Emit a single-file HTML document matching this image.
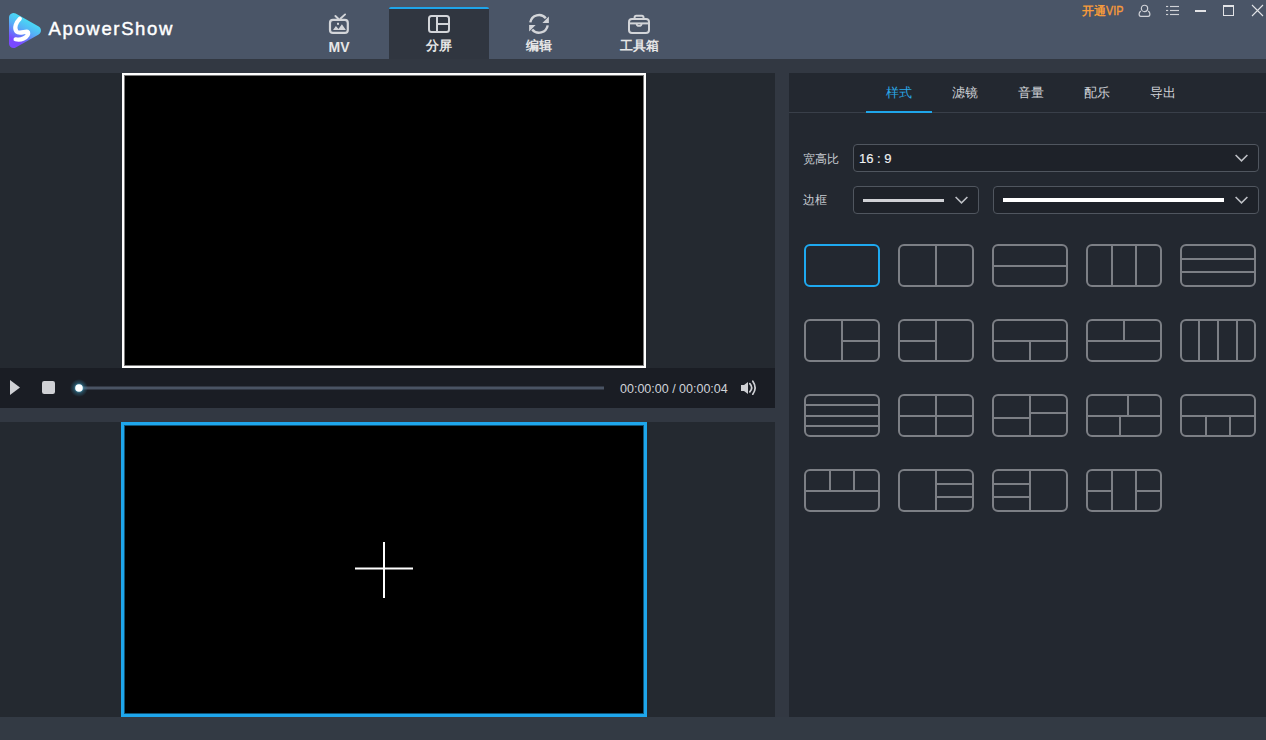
<!DOCTYPE html>
<html><head><meta charset="utf-8">
<style>
*{margin:0;padding:0;box-sizing:border-box}
html,body{width:1266px;height:740px;overflow:hidden;background:#333a44;font-family:"Liberation Sans",sans-serif;position:relative}
.abs{position:absolute}
#title{left:0;top:0;width:1266px;height:59px;background:#4a5567}
#strip{left:0;top:59px;width:1266px;height:14px;background:#323842}
#lp1{left:0;top:73px;width:775px;height:295px;background:#242930}
#ctrl{left:0;top:368px;width:775px;height:40px;background:#1a1d24}
#gap{left:0;top:408px;width:775px;height:14px;background:#323842}
#lp2{left:0;top:422px;width:775px;height:295px;background:#242930}
#div{left:775px;top:73px;width:14px;height:644px;background:#323842}
#rp{left:789px;top:73px;width:477px;height:644px;background:#232830}
#status{left:0;top:717px;width:1266px;height:23px;background:#333a44}
#vid1{left:122px;top:73px;width:524px;height:295px;background:#000;border:2px solid #fff;box-shadow:inset 0 0 0 1px #7a7a7a}
#vid2{left:121px;top:422px;width:526px;height:295px;background:#000;border:3px solid #1ea6ec;box-shadow:inset 0 0 0 1px #0f5376}
.tab{top:0;width:100px;height:59px;color:#e6e6e6;font-size:13px;font-weight:bold;text-align:center}
.tab .lbl{position:absolute;left:0;width:100px;top:38px;line-height:16px}
.tab svg{position:absolute;top:12px;left:39px}
#tabact{background:#303640;top:7px;height:52px;border-top:2px solid #1fa5ea;border-radius:2px 2px 0 0}
.rtab{top:83px;width:66px;text-align:center;font-size:13px;color:#d0d3d8;line-height:20px}
.lab{left:803px;font-size:12px;color:#c8ccd2}
.dd{border:1px solid #50565f;border-radius:4px;background:#1e2229}
.chev{position:absolute}
.ico{position:absolute}
</style></head>
<body>
<div id="title" class="abs"></div>
<div id="strip" class="abs"></div>
<div id="lp1" class="abs"></div>
<div id="ctrl" class="abs"></div>
<div id="gap" class="abs"></div>
<div id="lp2" class="abs"></div>
<div id="div" class="abs"></div>
<div id="rp" class="abs"></div>
<div id="status" class="abs"></div>
<div id="vid1" class="abs"></div>

<svg class="abs" style="left:0;top:0" width="60" height="59" viewBox="0 0 60 59">
<defs><linearGradient id="lg" x1="0.75" y1="0.05" x2="0.3" y2="1">
<stop offset="0" stop-color="#46e4f3"/><stop offset="0.45" stop-color="#55b2f6"/><stop offset="1" stop-color="#7949ff"/></linearGradient></defs>
<polygon points="13.5,17.5 13.5,43.5 36.5,30.5" fill="url(#lg)" stroke="url(#lg)" stroke-width="9" stroke-linejoin="round"/>
<path d="M19.8,18.8 C16,22.5 13.8,28 16.5,31.5 C19.5,34.5 25,31 27.5,31.8 C29.5,33 27,37 23.5,38.5 C20.5,40 17.5,39.8 15.6,39.3" fill="none" stroke="#fff" stroke-width="4.2" stroke-linecap="round" stroke-linejoin="round"/>
</svg>
<div class="abs" id="brand" style="left:48.5px;top:18px;font-size:18.5px;color:#fff;letter-spacing:1.65px;line-height:22px;-webkit-text-stroke:0.45px #fff">ApowerShow</div>

<div class="abs tab" style="left:289px">
<svg width="24" height="24" viewBox="0 0 24 24" style="left:38px;top:12px">
<rect x="3" y="7.9" width="17.8" height="13" rx="3" fill="none" stroke="#d3d5d9" stroke-width="2.2"/>
<line x1="8.4" y1="4" x2="11.3" y2="6.8" stroke="#d3d5d9" stroke-width="1.9" stroke-linecap="round"/>
<line x1="18.1" y1="2.4" x2="13.3" y2="6.8" stroke="#d3d5d9" stroke-width="1.9" stroke-linecap="round"/>
<polygon points="6,18 8.9,14 11.5,16.9 14.9,12.3 18.9,18" fill="#d3d5d9"/>
<rect x="10" y="10.8" width="2" height="2" fill="#d3d5d9"/>
</svg>
<div class="lbl" style="font-size:14px;top:39px">MV</div></div>

<div class="abs tab" id="tabact" style="left:389px">
<svg width="24" height="22" viewBox="0 0 24 22" style="left:38px;top:5px">
<rect x="2" y="2" width="20" height="16" rx="2.5" fill="none" stroke="#d3d5d9" stroke-width="2"/>
<line x1="10" y1="2" x2="10" y2="18" stroke="#d3d5d9" stroke-width="2"/>
<line x1="10" y1="10" x2="22" y2="10" stroke="#d3d5d9" stroke-width="2"/>
</svg>
<div class="lbl" style="top:29px">分屏</div></div>

<div class="abs tab" style="left:489px">
<svg width="24" height="24" viewBox="0 0 24 24" style="left:38px;top:12px">
<path d="M3.3,10.4 A8.8,8.8 0 0 1 18.8,6.3" fill="none" stroke="#d3d5d9" stroke-width="2.4"/>
<path d="M20.7,13.4 A8.8,8.8 0 0 1 5.2,17.5" fill="none" stroke="#d3d5d9" stroke-width="2.4"/>
<polygon points="21.9,4.4 21.9,10.9 15.4,10.9" fill="#d3d5d9"/>
<polygon points="2.1,19.5 2.1,13 8.6,13" fill="#d3d5d9"/>
</svg>
<div class="lbl">编辑</div></div>

<div class="abs tab" style="left:589px">
<svg width="26" height="24" viewBox="0 0 26 24" style="left:38px;top:12px">
<rect x="2" y="7" width="20" height="14" rx="3" fill="none" stroke="#d3d5d9" stroke-width="2"/>
<path d="M7.6,7 V5.3 A1.5,1.5 0 0 1 9.1,3.8 H15 A1.5,1.5 0 0 1 16.5,5.3 V7" fill="none" stroke="#d3d5d9" stroke-width="2"/>
<line x1="2" y1="11.4" x2="22" y2="11.4" stroke="#d3d5d9" stroke-width="2"/>
<path d="M9.6,11.4 A2.5,2.5 0 0 0 14.6,11.4" fill="none" stroke="#d3d5d9" stroke-width="1.8"/>
</svg>
<div class="lbl">工具箱</div></div>

<div class="abs" style="left:1082px;top:3px;font-size:12px;font-weight:bold;color:#f59a3b;line-height:16px">开通<span style="display:inline-block;font-size:12.5px;font-weight:normal;-webkit-text-stroke:0.4px #f59a3b;transform:scaleX(0.86);transform-origin:0 0">VIP</span></div>
<svg class="abs" style="left:1136px;top:3px" width="16" height="16" viewBox="0 0 16 16">
<circle cx="8.5" cy="5.4" r="3.15" fill="none" stroke="#cfd1d6" stroke-width="1.2"/>
<path d="M4.8,8.1 C3.6,9 3.1,10.2 3.1,11 C3.1,12.6 3.9,13.4 4.8,13.4 H12.2 C13.1,13.4 13.9,12.6 13.9,11 C13.9,10.2 13.4,9 12.2,8.1" fill="none" stroke="#cfd1d6" stroke-width="1.2"/>
</svg>
<svg class="abs" style="left:1164px;top:3px" width="18" height="16" viewBox="0 0 18 16">
<g stroke="#cfd1d6" stroke-width="1.15">
<line x1="2" y1="3.5" x2="4.2" y2="3.5"/><line x1="6" y1="3.5" x2="15" y2="3.5"/>
<line x1="2" y1="7.5" x2="4.2" y2="7.5"/><line x1="6" y1="7.5" x2="15" y2="7.5"/>
<line x1="2" y1="11.5" x2="4.2" y2="11.5"/><line x1="6" y1="11.5" x2="15" y2="11.5"/>
</g></svg>
<div class="abs" style="left:1195px;top:10px;width:11px;height:2px;background:#e2e3e6"></div>
<div class="abs" style="left:1223px;top:5px;width:11px;height:11px;border:1px solid #e2e3e6;border-top-width:2px"></div>
<svg class="abs" style="left:1250px;top:3px" width="16" height="16" viewBox="0 0 16 16">
<path d="M2,2 L13,13 M13,2 L2,13" stroke="#e2e3e6" stroke-width="1.1"/>
</svg>

<div id="vid2" class="abs"></div>

<svg class="abs" style="left:0;top:368px" width="775" height="40" viewBox="0 0 775 40">
<defs><radialGradient id="glow"><stop offset="0.35" stop-color="#45b5dc" stop-opacity="0.75"/><stop offset="0.6" stop-color="#3a8fb0" stop-opacity="0.35"/><stop offset="1" stop-color="#3a8fb0" stop-opacity="0"/></radialGradient></defs>
<polygon points="10,12 10,27 20,19.5" fill="#d0d1d5"/>
<rect x="42" y="13" width="13" height="13" rx="2.2" fill="#d0d1d5"/>
<rect x="79" y="18.5" width="525" height="3" fill="#4a5464"/>
<circle cx="79" cy="20" r="9" fill="url(#glow)"/>
<circle cx="79" cy="20" r="3.8" fill="#fff"/>
<path d="M741,17 H744 L748,14 V26 L744,23 H741 Z" fill="#cfd0d4"/>
<path d="M749.8,15.6 Q753.6,19.7 749.8,23.8" fill="none" stroke="#cfd0d4" stroke-width="1.7" stroke-linecap="round"/>
<path d="M752.8,13.2 Q757.4,19.7 752.8,26.2" fill="none" stroke="#cfd0d4" stroke-width="1.7" stroke-linecap="round"/>
</svg>
<div class="abs" style="left:620px;top:382px;font-size:12.5px;color:#cfd3d9;line-height:15px">00:00:00 / 00:00:04</div>

<div class="abs" style="left:789px;top:112px;width:477px;height:1px;background:#393f49"></div>
<div class="abs" style="left:866px;top:111px;width:66px;height:2px;background:#1fa6ea"></div>
<div class="abs rtab" style="left:866px;color:#2aa8e8">样式</div>
<div class="abs rtab" style="left:932px">滤镜</div>
<div class="abs rtab" style="left:998px">音量</div>
<div class="abs rtab" style="left:1064px">配乐</div>
<div class="abs rtab" style="left:1130px">导出</div>
<div class="abs lab" style="top:150px;line-height:18px">宽高比</div>
<div class="abs lab" style="top:191px;line-height:18px">边框</div>
<div class="abs dd" style="left:853px;top:144px;width:406px;height:28px"></div>
<div class="abs" style="left:859px;top:151px;font-size:13px;color:#f0f1f3;line-height:16px;-webkit-text-stroke:0.15px #f0f1f3">16 : 9</div>
<div class="abs dd" style="left:853px;top:186px;width:126px;height:28px"></div>
<div class="abs" style="left:863px;top:199px;width:81px;height:3px;background:#d0d1d5"></div>
<div class="abs dd" style="left:993px;top:186px;width:266px;height:28px"></div>
<div class="abs" style="left:1003px;top:198px;width:221px;height:4px;background:#ffffff"></div>
<svg class="abs" style="left:1234px;top:153px" width="14" height="10" viewBox="0 0 14 10"><path d="M1.6,2 L7.5,7.9 L13.4,2" fill="none" stroke="#bec1c6" stroke-width="1.55"/></svg>
<svg class="abs" style="left:954px;top:195px" width="14" height="10" viewBox="0 0 14 10"><path d="M1.6,2 L7.5,7.9 L13.4,2" fill="none" stroke="#bec1c6" stroke-width="1.55"/></svg>
<svg class="abs" style="left:1234px;top:195px" width="14" height="10" viewBox="0 0 14 10"><path d="M1.6,2 L7.5,7.9 L13.4,2" fill="none" stroke="#bec1c6" stroke-width="1.55"/></svg>
<svg class="ico" style="left:804px;top:244px" width="76" height="43" viewBox="0 0 76 43"><g fill="none" stroke="#1ea9f0" stroke-width="2"><rect x="1" y="1" width="74" height="41" rx="5"/></g></svg>
<svg class="ico" style="left:898px;top:244px" width="76" height="43" viewBox="0 0 76 43"><g fill="none" stroke="#7c7f85" stroke-width="2"><rect x="1" y="1" width="74" height="41" rx="5"/><path d="M38,1V42"/></g></svg>
<svg class="ico" style="left:992px;top:244px" width="76" height="43" viewBox="0 0 76 43"><g fill="none" stroke="#7c7f85" stroke-width="2"><rect x="1" y="1" width="74" height="41" rx="5"/><path d="M1,22H75"/></g></svg>
<svg class="ico" style="left:1086px;top:244px" width="76" height="43" viewBox="0 0 76 43"><g fill="none" stroke="#7c7f85" stroke-width="2"><rect x="1" y="1" width="74" height="41" rx="5"/><path d="M26,1V42"/><path d="M50,1V42"/></g></svg>
<svg class="ico" style="left:1180px;top:244px" width="76" height="43" viewBox="0 0 76 43"><g fill="none" stroke="#7c7f85" stroke-width="2"><rect x="1" y="1" width="74" height="41" rx="5"/><path d="M1,15H75"/><path d="M1,28H75"/></g></svg>
<svg class="ico" style="left:804px;top:319px" width="76" height="43" viewBox="0 0 76 43"><g fill="none" stroke="#7c7f85" stroke-width="2"><rect x="1" y="1" width="74" height="41" rx="5"/><path d="M38,1V42"/><path d="M38,22H75"/></g></svg>
<svg class="ico" style="left:898px;top:319px" width="76" height="43" viewBox="0 0 76 43"><g fill="none" stroke="#7c7f85" stroke-width="2"><rect x="1" y="1" width="74" height="41" rx="5"/><path d="M38,1V42"/><path d="M1,22H38"/></g></svg>
<svg class="ico" style="left:992px;top:319px" width="76" height="43" viewBox="0 0 76 43"><g fill="none" stroke="#7c7f85" stroke-width="2"><rect x="1" y="1" width="74" height="41" rx="5"/><path d="M1,22H75"/><path d="M38,22V42"/></g></svg>
<svg class="ico" style="left:1086px;top:319px" width="76" height="43" viewBox="0 0 76 43"><g fill="none" stroke="#7c7f85" stroke-width="2"><rect x="1" y="1" width="74" height="41" rx="5"/><path d="M1,22H75"/><path d="M38,1V22"/></g></svg>
<svg class="ico" style="left:1180px;top:319px" width="76" height="43" viewBox="0 0 76 43"><g fill="none" stroke="#7c7f85" stroke-width="2"><rect x="1" y="1" width="74" height="41" rx="5"/><path d="M19,1V42"/><path d="M38,1V42"/><path d="M57,1V42"/></g></svg>
<svg class="ico" style="left:804px;top:394px" width="76" height="43" viewBox="0 0 76 43"><g fill="none" stroke="#7c7f85" stroke-width="2"><rect x="1" y="1" width="74" height="41" rx="5"/><path d="M1,11H75"/><path d="M1,22H75"/><path d="M1,32H75"/></g></svg>
<svg class="ico" style="left:898px;top:394px" width="76" height="43" viewBox="0 0 76 43"><g fill="none" stroke="#7c7f85" stroke-width="2"><rect x="1" y="1" width="74" height="41" rx="5"/><path d="M38,1V42"/><path d="M1,22H75"/></g></svg>
<svg class="ico" style="left:992px;top:394px" width="76" height="43" viewBox="0 0 76 43"><g fill="none" stroke="#7c7f85" stroke-width="2"><rect x="1" y="1" width="74" height="41" rx="5"/><path d="M38,1V42"/><path d="M1,24H38"/><path d="M38,19H75"/></g></svg>
<svg class="ico" style="left:1086px;top:394px" width="76" height="43" viewBox="0 0 76 43"><g fill="none" stroke="#7c7f85" stroke-width="2"><rect x="1" y="1" width="74" height="41" rx="5"/><path d="M1,22H75"/><path d="M42,1V22"/><path d="M34,22V42"/></g></svg>
<svg class="ico" style="left:1180px;top:394px" width="76" height="43" viewBox="0 0 76 43"><g fill="none" stroke="#7c7f85" stroke-width="2"><rect x="1" y="1" width="74" height="41" rx="5"/><path d="M1,22H75"/><path d="M26,22V42"/><path d="M50,22V42"/></g></svg>
<svg class="ico" style="left:804px;top:469px" width="76" height="43" viewBox="0 0 76 43"><g fill="none" stroke="#7c7f85" stroke-width="2"><rect x="1" y="1" width="74" height="41" rx="5"/><path d="M1,22H75"/><path d="M26,1V22"/><path d="M50,1V22"/></g></svg>
<svg class="ico" style="left:898px;top:469px" width="76" height="43" viewBox="0 0 76 43"><g fill="none" stroke="#7c7f85" stroke-width="2"><rect x="1" y="1" width="74" height="41" rx="5"/><path d="M38,1V42"/><path d="M38,15H75"/><path d="M38,28H75"/></g></svg>
<svg class="ico" style="left:992px;top:469px" width="76" height="43" viewBox="0 0 76 43"><g fill="none" stroke="#7c7f85" stroke-width="2"><rect x="1" y="1" width="74" height="41" rx="5"/><path d="M38,1V42"/><path d="M1,15H38"/><path d="M1,28H38"/></g></svg>
<svg class="ico" style="left:1086px;top:469px" width="76" height="43" viewBox="0 0 76 43"><g fill="none" stroke="#7c7f85" stroke-width="2"><rect x="1" y="1" width="74" height="41" rx="5"/><path d="M26,1V42"/><path d="M50,1V42"/><path d="M1,22H26"/><path d="M50,22H75"/></g></svg>
<svg class="abs" style="left:340px;top:530px" width="90" height="80" viewBox="0 0 90 80">
<line x1="15" y1="38.5" x2="73" y2="38.5" stroke="#fff" stroke-width="2"/>
<line x1="44" y1="12" x2="44" y2="68" stroke="#fff" stroke-width="2"/>
</svg>
</body></html>
